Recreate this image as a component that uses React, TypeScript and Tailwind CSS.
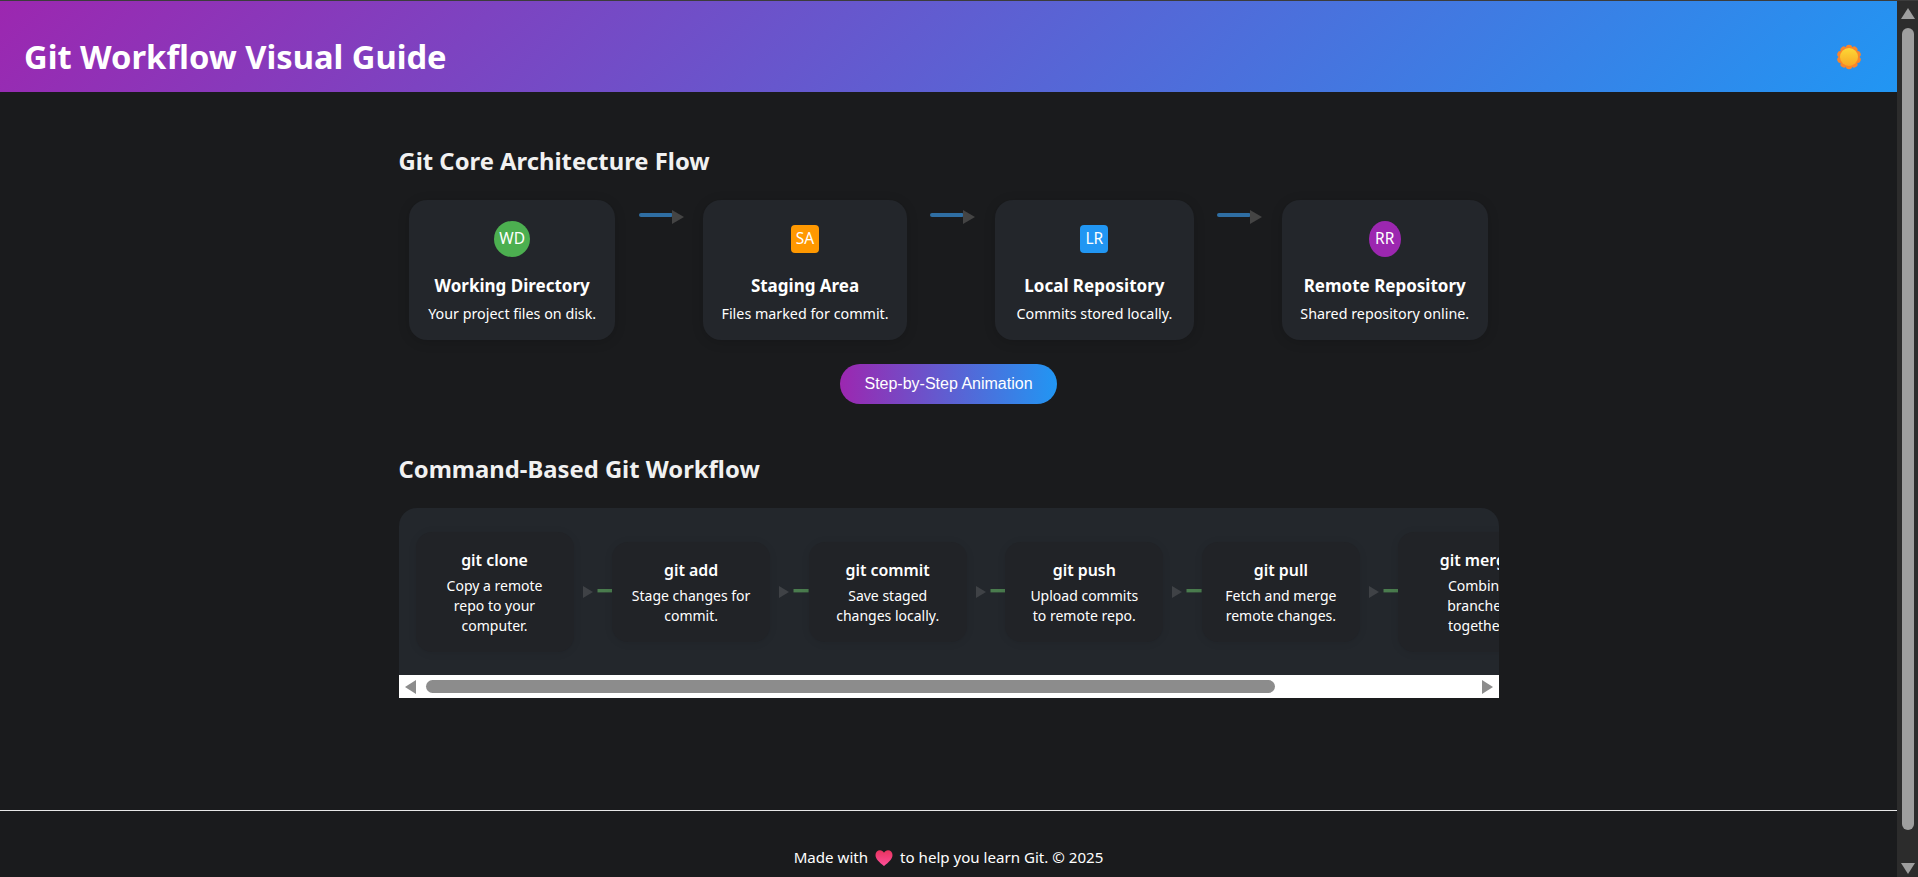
const FONT = "font-['Noto_Sans',sans-serif]"

const STAGES = [
  { badge: 'WD', badgeClass: 'h-9 w-9 rounded-full bg-[#4caf50]', title: 'Working Directory', desc: 'Your project files on disk.', width: 'w-[206px]' },
  { badge: 'SA', badgeClass: 'h-7 w-7 my-1 rounded bg-[#ff9800]', title: 'Staging Area', desc: 'Files marked for commit.', width: 'w-[204px]' },
  { badge: 'LR', badgeClass: 'h-7 w-7 my-1 rounded bg-[#2196f3]', title: 'Local Repository', desc: 'Commits stored locally.', width: 'w-[199px]' },
  { badge: 'RR', badgeClass: 'h-9 w-8 rounded-[50%] bg-[#9c27b0]', title: 'Remote Repository', desc: 'Shared repository online.', width: 'w-[206px]' },
]

const COMMANDS = [
  { name: 'git clone', lines: ['Copy a remote', 'repo to your', 'computer.'] },
  { name: 'git add', lines: ['Stage changes for', 'commit.'] },
  { name: 'git commit', lines: ['Save staged', 'changes locally.'] },
  { name: 'git push', lines: ['Upload commits', 'to remote repo.'] },
  { name: 'git pull', lines: ['Fetch and merge', 'remote changes.'] },
  { name: 'git merge', lines: ['Combine', 'branches', 'together.'] },
]

function StageArrow() {
  return (
    <svg width="45" height="16" viewBox="0 0 45 16" className="-mr-[2px] ml-[2px] mt-[10px] shrink-0">
      <rect x="0" y="3" width="34" height="4" rx="2" fill="#2f6ea3" />
      <path d="M33 0 L45 7 L33 14 Z" fill="#444444" />
    </svg>
  )
}

function CommandConnector() {
  return (
    <svg viewBox="0 0 38.6 12" className="h-3 w-[38.6px] shrink-0">
      <path d="M9 0 L19 6 L9 12 Z" fill="#3f4246" />
      <rect x="23.5" y="3" width="15.1" height="3.4" fill="#4a7c4e" />
    </svg>
  )
}

function SunIcon() {
  const petals = [0, 36, 72, 108, 144, 180, 216, 252, 288, 324]
  return (
    <svg width="26" height="26" viewBox="0 0 26 26">
      <defs>
        <linearGradient id="sunFill" x1="0" y1="0" x2="0" y2="1">
          <stop offset="0" stopColor="#fdd835" />
          <stop offset="1" stopColor="#f9a825" />
        </linearGradient>
      </defs>
      {petals.map((deg) => (
        <circle key={deg} cx="13" cy="4" r="3.2" fill="#f9852c" transform={`rotate(${deg} 13 13)`} />
      ))}
      <circle cx="13" cy="13" r="10" fill="#f9852c" />
      <circle cx="13" cy="13" r="9" fill="url(#sunFill)" />
    </svg>
  )
}

function HeartIcon() {
  return (
    <svg width="18" height="16" viewBox="0 0 18 16" className="mx-[7px] inline-block align-[-3px]">
      <defs>
        <linearGradient id="heartFill" x1="0" y1="0" x2="0" y2="1">
          <stop offset="0" stopColor="#e8345f" />
          <stop offset="1" stopColor="#ff4f9a" />
        </linearGradient>
      </defs>
      <path d="M9 16 C4 12 0.5 9 0.5 5 C0.5 2 2.6 0.3 5 0.3 C6.7 0.3 8.2 1.2 9 2.7 C9.8 1.2 11.3 0.3 13 0.3 C15.4 0.3 17.5 2 17.5 5 C17.5 9 14 12 9 16 Z" fill="url(#heartFill)" />
    </svg>
  )
}

export default function App() {
  return (
    <div className={`flex h-[877px] overflow-hidden border-t border-[#3c3c3c] bg-[#1a1b1d] text-white ${FONT}`}>
      <div className="min-w-0 flex-1">
        <header className="flex h-[91px] items-center justify-between bg-[linear-gradient(135deg,#9c27b0,#2196f3)] pl-6 pr-[35px] pt-[21px]">
          <h1 className="text-[32.7px] font-bold leading-10">Git Workflow Visual Guide</h1>
          <SunIcon />
        </header>

        <main className="mx-auto w-[1100px] pt-[53px]">
          <h2 className="mb-[23px] h-8 text-[23.8px] font-bold leading-8 text-[#f1f1f1]">Git Core Architecture Flow</h2>
          <div className="flex items-start justify-around">
            {STAGES.map((stage, i) => (
              <div key={stage.title} className="contents">
                {i > 0 && <StageArrow />}
                <div className={`flex h-[140px] shrink-0 flex-col items-center rounded-[18px] bg-[#23262b] pt-[21px] shadow-[0_2px_12px_rgba(0,0,0,0.15)] ${stage.width}`}>
                  <div className={`flex items-center justify-center text-[15.5px] ${stage.badgeClass}`}>{stage.badge}</div>
                  <h3 className="mt-[17px] text-[17px] font-bold leading-6">{stage.title}</h3>
                  <p className="mt-[6px] text-[14.3px] leading-5">{stage.desc}</p>
                </div>
              </div>
            ))}
          </div>
          <div className="mt-6 flex justify-center">
            <button type="button" className="h-10 w-[217px] rounded-full bg-[linear-gradient(90deg,#9c27b0,#2196f3)] font-['Liberation_Sans',sans-serif] text-base">
              Step-by-Step Animation
            </button>
          </div>

          <h2 className="mb-[23px] mt-[49px] h-8 text-[23.8px] font-bold leading-8 text-[#f1f1f1]">Command-Based Git Workflow</h2>
          <div className="overflow-hidden rounded-t-[18px] bg-[#23272c]">
            <div className="flex h-[167px] items-center overflow-hidden pl-[17px]">
              {COMMANDS.map((cmd, i) => (
                <div key={cmd.name} className="contents">
                  {i > 0 && <CommandConnector />}
                  <div className="w-[158px] shrink-0 rounded-2xl bg-[#212327] pb-4 pt-[17px] text-center shadow-[0_1px_8px_rgba(0,0,0,0.08)]">
                    <h4 className="mb-[5px] text-[15.9px] font-semibold leading-[22px]">{cmd.name}</h4>
                    {cmd.lines.map((line) => (
                      <div key={line} className="text-[14px] leading-5">{line}</div>
                    ))}
                  </div>
                </div>
              ))}
            </div>
            <div className="flex h-[23px] items-center bg-white pl-[6px] pr-[6px]">
              <svg width="11" height="14" viewBox="0 0 11 14" className="shrink-0">
                <path d="M11 0 V14 L0 7 Z" fill="#8c8c8c" />
              </svg>
              <div className="ml-[10px] h-[13px] w-[849px] rounded-full bg-[#8c8c8c]" />
              <div className="flex-1" />
              <svg width="11" height="14" viewBox="0 0 11 14" className="shrink-0">
                <path d="M0 0 V14 L11 7 Z" fill="#8c8c8c" />
              </svg>
            </div>
          </div>
        </main>

        <hr className="mt-[112px] border-t border-[#e8e8e8]" />
        <footer className="pt-[35px] text-center text-[15.1px] leading-[22px]">
          Made with
          <HeartIcon />
          to help you learn Git. © 2025
        </footer>
      </div>

      <aside className="flex w-[21px] shrink-0 flex-col items-center bg-[#2c2c2c] pb-[3px] pt-[7px]">
        <svg width="14" height="11" viewBox="0 0 14 11" className="shrink-0">
          <path d="M7 0 L14 11 H0 Z" fill="#9e9e9e" />
        </svg>
        <div className="mt-[9px] h-[802px] w-3 shrink-0 rounded-full bg-[#9e9e9e]" />
        <div className="flex-1" />
        <svg width="14" height="11" viewBox="0 0 14 11" className="shrink-0">
          <path d="M0 0 H14 L7 11 Z" fill="#9e9e9e" />
        </svg>
      </aside>
    </div>
  )
}
